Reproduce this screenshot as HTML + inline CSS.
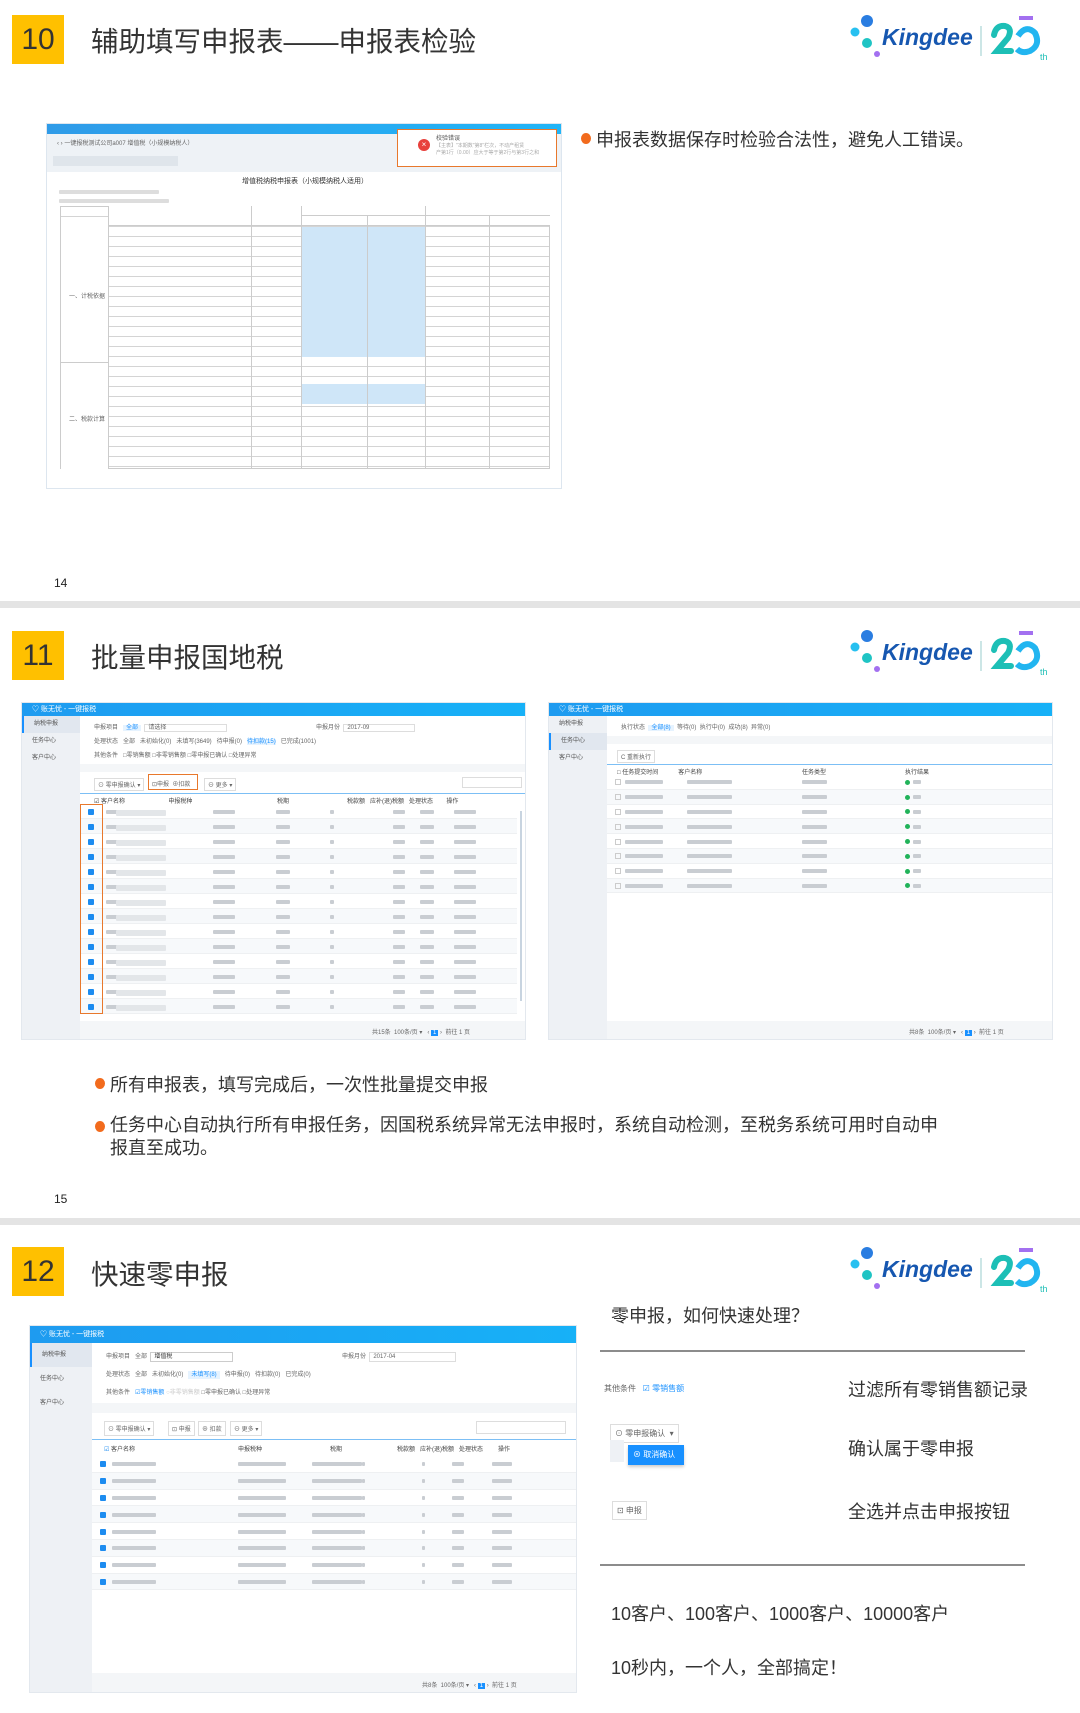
<!DOCTYPE html>
<html><head><meta charset="utf-8">
<style>
*{margin:0;padding:0;box-sizing:border-box}
body{width:1080px;height:1713px;background:#fff;position:relative;overflow:hidden;font-family:"Liberation Sans","Noto Sans CJK SC",sans-serif;color:#333}
.a{position:absolute}
.num{position:absolute;left:12px;width:52px;height:49px;background:#ffc000;color:#333;font-size:30px;line-height:49px;text-align:center}
.title{position:absolute;left:91px;font-size:27.5px;color:#333;font-family:"Liberation Sans","Noto Sans CJK SC",sans-serif}
.sep{position:absolute;left:0;width:1080px;height:7px;background:#e4e4e4}
.pg{position:absolute;left:54px;font-size:12px;color:#222}
.bul{position:absolute;font-size:18px;color:#333;white-space:nowrap}
.bul:before{content:"";position:absolute;left:-15px;top:7px;width:10px;height:11px;border-radius:50%;background:#f26b1d}
.logo{position:absolute;left:848px;width:210px;height:60px}
.win{position:absolute;background:#f5f7fa;border:1px solid #e3e8ee;overflow:hidden}
.tb{position:absolute;left:0;top:0;right:0;height:13px;background:linear-gradient(90deg,#1e9bf0,#17b1f7);color:#fff;font-size:7px;line-height:13px;padding-left:10px}
.side{position:absolute;left:0;top:13px;bottom:0;width:58px;background:#eef1f5;font-size:6px;color:#555}
.side div{height:17px;line-height:17px;padding-left:10px}
.side .on{background:#e1e7ef;border-left:2px solid #1890ff}
.main{position:absolute;left:58px;top:13px;right:0;bottom:0;background:#fff}
.f{font-size:6px;color:#666;position:absolute;white-space:nowrap}
.row{position:absolute;left:0;right:0;border-bottom:1px solid #eef0f2}
.cb{position:absolute;width:6px;height:6px;background:#1d8cf0;border-radius:1px}
.gb{position:absolute;height:4px;background:#c9cdd2;border-radius:1px}
.grn{position:absolute;width:5px;height:5px;border-radius:50%;background:#21b35a}
.vl{position:absolute;width:1px;background:#ccc}
</style></head><body>

<!-- ===== Section 10 ===== -->
<div class="num" style="top:15px">10</div>
<div class="title" style="top:19px">辅助填写申报表——申报表检验</div>
<svg class="logo" style="top:8px" viewBox="0 0 210 60">
<circle cx="19" cy="13" r="6" fill="#2a7de1"/><circle cx="7" cy="24" r="4.5" fill="#27c0f0"/><circle cx="19" cy="35" r="5" fill="#1fc4c4"/><circle cx="29" cy="46" r="3" fill="#a370f0"/>
<text x="34" y="37" font-family="Liberation Sans" font-weight="bold" font-style="italic" font-size="23" fill="#1657b0">Kingdee</text>
<line x1="133" y1="18" x2="133" y2="48" stroke="#9cc" stroke-width="1"/>
<path d="M146 27 q2-10 11-9 q8 2 3 12 l-11 13 h14" fill="none" stroke="#1dbfb6" stroke-width="6" stroke-linecap="round"/>
<path d="M170 28 q8-12 17 -3 q6 12 -5 18 q-8 3 -13 -2" fill="none" stroke="#22b5f0" stroke-width="6"/>
<rect x="171" y="8" width="14" height="4" fill="#a370f0"/>
<text x="192" y="52" font-size="9" fill="#1dbfb6" font-family="Liberation Sans">th</text>
</svg>

<!-- screenshot 1 -->
<div class="a" style="left:46px;top:123px;width:516px;height:366px;border:1px solid #dde6ef;background:#fff;overflow:hidden">
 <div class="a" style="left:0;top:0;width:516px;height:10px;background:linear-gradient(90deg,#2f9be8,#21b5f7)"></div>
 <div class="a" style="left:0;top:10px;width:516px;height:38px;background:#eef2f6"></div>
 <div class="f" style="left:10px;top:14px">‹ ›  一键报税测试公司a007  增值税（小规模纳税人）</div>
 <div class="a" style="left:6px;top:32px;width:125px;height:10px;background:#dfe5eb"></div>
 <div class="f" style="left:195px;top:52px;font-size:7px;color:#333">增值税纳税申报表（小规模纳税人适用）</div>
 <div class="gb" style="left:12px;top:66px;width:100px;background:#ddd"></div>
 <div class="gb" style="left:12px;top:75px;width:110px;background:#ddd"></div>
 <div class="a" style="left:13px;top:82px;width:490px;height:263px;border:1px solid #ccc;
 background:
 linear-gradient(#cfe6f8,#cfe6f8) 241px 20px/124px 130px no-repeat,
 linear-gradient(#cfe6f8,#cfe6f8) 241px 177px/124px 20px no-repeat,
 repeating-linear-gradient(#fff 0 9.1px,#d4d4d4 9.1px 10px),#fff"></div>
 <div class="a" style="left:61px;top:82px;width:442px;height:20px;background:#fff;border-bottom:1px solid #ccc"></div>
 <div class="a" style="left:254px;top:91px;width:249px;height:1px;background:#ccc"></div>
 <div class="vl" style="left:61px;top:82px;height:263px"></div>
 <div class="vl" style="left:204px;top:82px;height:263px"></div>
 <div class="vl" style="left:254px;top:82px;height:263px"></div>
 <div class="vl" style="left:320px;top:91px;height:254px"></div>
 <div class="vl" style="left:378px;top:82px;height:263px"></div>
 <div class="vl" style="left:442px;top:91px;height:254px"></div>
 <div class="a" style="left:14px;top:102px;width:47px;height:243px;background:#fff"></div>
 <div class="a" style="left:13px;top:238px;width:49px;height:1px;background:#ccc"></div>
 <div class="f" style="left:22px;top:167px">一、计税依据</div>
 <div class="f" style="left:22px;top:290px">二、税款计算</div>
 <!-- error popup -->
 <div class="a" style="left:350px;top:5px;width:160px;height:38px;border:1px solid #e8782c;background:#fff">
  <div class="a" style="left:20px;top:9px;width:12px;height:12px;border-radius:50%;background:#e8413c;color:#fff;font-size:8px;line-height:12px;text-align:center">×</div>
  <div class="f" style="left:38px;top:3px;color:#555">校验错误</div>
  <div class="f" style="left:38px;top:12px;color:#aaa;font-size:5px">【主表】"本期数"第8"栏次，不动产租赁</div>
  <div class="f" style="left:38px;top:19px;color:#aaa;font-size:5px">产第1行（0.00）应大于等于第2行与第3行之和</div>
 </div>
</div>
<div class="bul" style="left:596px;top:126px">申报表数据保存时检验合法性，避免人工错误。</div>
<div class="pg" style="top:576px">14</div>
<div class="sep" style="top:601px"></div>

<!-- ===== Section 11 ===== -->
<div class="num" style="top:631px">11</div>
<div class="title" style="top:635px">批量申报国地税</div>
<svg class="logo" style="top:623px" viewBox="0 0 210 60">
<circle cx="19" cy="13" r="6" fill="#2a7de1"/><circle cx="7" cy="24" r="4.5" fill="#27c0f0"/><circle cx="19" cy="35" r="5" fill="#1fc4c4"/><circle cx="29" cy="46" r="3" fill="#a370f0"/>
<text x="34" y="37" font-family="Liberation Sans" font-weight="bold" font-style="italic" font-size="23" fill="#1657b0">Kingdee</text>
<line x1="133" y1="18" x2="133" y2="48" stroke="#9cc" stroke-width="1"/>
<path d="M146 27 q2-10 11-9 q8 2 3 12 l-11 13 h14" fill="none" stroke="#1dbfb6" stroke-width="6" stroke-linecap="round"/>
<path d="M170 28 q8-12 17 -3 q6 12 -5 18 q-8 3 -13 -2" fill="none" stroke="#22b5f0" stroke-width="6"/>
<rect x="171" y="8" width="14" height="4" fill="#a370f0"/>
<text x="192" y="52" font-size="9" fill="#1dbfb6" font-family="Liberation Sans">th</text>
</svg>

<!-- left window -->
<div class="win" style="left:21px;top:702px;width:505px;height:338px">
 <div class="tb">♡ 账无忧 - 一键报税</div>
 <div class="side"><div class="on">纳税申报</div><div>任务中心</div><div>客户中心</div></div>
 <div class="main">
  <div class="f" style="left:14px;top:6px">申报项目 &nbsp; <span style="color:#1890ff;background:#e6f3ff;padding:0 3px">全部</span> &nbsp;<span style="border:1px solid #ddd;padding:0 60px 0 3px">请选择</span></div>
  <div class="f" style="left:236px;top:6px">申报月份 &nbsp;<span style="border:1px solid #ddd;padding:0 45px 0 3px">2017-09</span></div>
  <div class="f" style="left:14px;top:20px">处理状态 &nbsp; 全部 &nbsp; 未初始化(0) &nbsp; 未填写(3649) &nbsp; 待申报(0) &nbsp; <span style="color:#1890ff;background:#e6f3ff">待扣款(15)</span> &nbsp; 已完成(1001)</div>
  <div class="f" style="left:14px;top:34px">其他条件 &nbsp; □零销售额 □非零销售额 □零申报已确认 □处理异常</div>
  <div class="a" style="left:0;top:48px;right:0;height:8px;background:#f4f6f8"></div>
  <div class="f" style="left:14px;top:62px;border:1px solid #ddd;padding:1px 3px">⊙ 零申报确认 ▾</div>
  <div class="a" style="left:68px;top:58px;width:50px;height:16px;border:1.5px solid #e8782c"></div>
  <div class="f" style="left:72px;top:63px">⊡申报 &nbsp;⊕扣款</div>
  <div class="f" style="left:124px;top:62px;border:1px solid #ddd;padding:1px 3px">⊖ 更多 ▾</div>
  <div class="a" style="left:382px;top:61px;width:60px;height:11px;border:1px solid #ddd"></div>
  <div class="a" style="left:0;top:77px;right:0;height:1px;background:#7cbff5"></div>
  <div class="f" style="left:14px;top:80px;color:#444">☑ 客户名称 &nbsp;&nbsp;&nbsp;&nbsp;&nbsp;&nbsp;&nbsp;&nbsp;&nbsp;&nbsp;&nbsp;&nbsp;&nbsp;&nbsp;&nbsp;&nbsp;&nbsp;&nbsp;&nbsp;&nbsp;&nbsp;&nbsp;&nbsp;&nbsp; 申报税种</div>
  <div class="f" style="left:197px;top:80px;color:#444">税期</div>
  <div class="f" style="left:267px;top:80px;color:#444">税款额 &nbsp; 应补(退)税额 &nbsp; 处理状态 &nbsp;&nbsp;&nbsp;&nbsp;&nbsp;&nbsp; 操作</div>
  <div id="r1" class="a" style="left:0;top:88px;right:8px;height:210px"></div>
  <div class="a" style="left:0;top:88px;width:23px;height:210px;border:1.5px solid #e8782c"></div>
  <div class="a" style="right:3px;top:95px;width:2px;height:190px;background:#c8d4e0"></div>
  <div class="a" style="left:0;top:305px;right:0;bottom:0;background:#f4f6f8"></div>
  <div class="f" style="left:292px;top:311px">共15条 &nbsp;100条/页 ▾ &nbsp; ‹ <span style="background:#1890ff;color:#fff;padding:0 2px">1</span> › &nbsp;前往 1 页</div>
 </div>
</div>

<!-- right window -->
<div class="win" style="left:548px;top:702px;width:505px;height:338px">
 <div class="tb">♡ 账无忧 - 一键报税</div>
 <div class="side"><div>纳税申报</div><div class="on">任务中心</div><div>客户中心</div></div>
 <div class="main">
  <div class="f" style="left:14px;top:6px">执行状态 &nbsp;<span style="color:#1890ff;background:#e6f3ff;padding:0 3px">全部(8)</span> &nbsp;等待(0) &nbsp;执行中(0) &nbsp;成功(8) &nbsp;异常(0)</div>
  <div class="a" style="left:0;top:20px;right:0;height:8px;background:#f4f6f8"></div>
  <div class="f" style="left:10px;top:34px;border:1px solid #ddd;padding:1px 3px">C 重新执行</div>
  <div class="a" style="left:0;top:48px;right:0;height:1px;background:#7cbff5"></div>
  <div class="f" style="left:10px;top:51px;color:#444">□ 任务提交时间 &nbsp;&nbsp;&nbsp;&nbsp;&nbsp;&nbsp;&nbsp;&nbsp;&nbsp;&nbsp; 客户名称</div>
  <div class="f" style="left:195px;top:51px;color:#444">任务类型</div>
  <div class="f" style="left:298px;top:51px;color:#444">执行结果</div>
  <div id="r2" class="a" style="left:0;top:59px;right:0;height:120px"></div>
  <div class="a" style="left:0;top:305px;right:0;bottom:0;background:#f4f6f8"></div>
  <div class="f" style="left:302px;top:311px">共8条 &nbsp;100条/页 ▾ &nbsp; ‹ <span style="background:#1890ff;color:#fff;padding:0 2px">1</span> › &nbsp;前往 1 页</div>
 </div>
</div>

<div class="bul" style="left:110px;top:1071px">所有申报表，填写完成后，一次性批量提交申报</div>
<div class="bul" style="left:110px;top:1114px;line-height:23px">任务中心自动执行所有申报任务，因国税系统异常无法申报时，系统自动检测，至税务系统可用时自动申<br>报直至成功。</div>
<div class="pg" style="top:1192px">15</div>
<div class="sep" style="top:1218px"></div>

<!-- ===== Section 12 ===== -->
<div class="num" style="top:1247px">12</div>
<div class="title" style="top:1252px">快速零申报</div>
<svg class="logo" style="top:1240px" viewBox="0 0 210 60">
<circle cx="19" cy="13" r="6" fill="#2a7de1"/><circle cx="7" cy="24" r="4.5" fill="#27c0f0"/><circle cx="19" cy="35" r="5" fill="#1fc4c4"/><circle cx="29" cy="46" r="3" fill="#a370f0"/>
<text x="34" y="37" font-family="Liberation Sans" font-weight="bold" font-style="italic" font-size="23" fill="#1657b0">Kingdee</text>
<line x1="133" y1="18" x2="133" y2="48" stroke="#9cc" stroke-width="1"/>
<path d="M146 27 q2-10 11-9 q8 2 3 12 l-11 13 h14" fill="none" stroke="#1dbfb6" stroke-width="6" stroke-linecap="round"/>
<path d="M170 28 q8-12 17 -3 q6 12 -5 18 q-8 3 -13 -2" fill="none" stroke="#22b5f0" stroke-width="6"/>
<rect x="171" y="8" width="14" height="4" fill="#a370f0"/>
<text x="192" y="52" font-size="9" fill="#1dbfb6" font-family="Liberation Sans">th</text>
</svg>

<div class="win" style="left:29px;top:1325px;width:548px;height:368px">
 <div class="tb" style="height:17px;line-height:17px">♡ 账无忧 - 一键报税</div>
 <div class="side" style="top:17px;width:62px"><div class="on" style="height:24px;line-height:24px">纳税申报</div><div style="height:24px;line-height:24px">任务中心</div><div style="height:24px;line-height:24px">客户中心</div></div>
 <div class="main" style="left:62px;top:17px">
  <div class="f" style="left:14px;top:8px">申报项目 &nbsp; 全部 &nbsp;<span style="border:1px solid #ccc;padding:1px 60px 1px 3px;color:#333">增值税</span></div>
  <div class="f" style="left:250px;top:8px">申报月份 &nbsp;<span style="border:1px solid #ddd;padding:1px 60px 1px 3px">2017-04</span></div>
  <div class="f" style="left:14px;top:26px">处理状态 &nbsp; 全部 &nbsp; 未初始化(0) &nbsp; <span style="color:#1890ff;background:#e6f3ff;padding:1px 3px">未填写(8)</span> &nbsp; 待申报(0) &nbsp; 待扣款(0) &nbsp; 已完成(0)</div>
  <div class="f" style="left:14px;top:44px">其他条件 &nbsp; <span style="color:#1890ff">☑零销售额</span> <span style="color:#ccc">○非零销售额</span> □零申报已确认 □处理异常</div>
  <div class="a" style="left:0;top:60px;right:0;height:10px;background:#f4f6f8"></div>
  <div class="f" style="left:12px;top:78px;border:1px solid #ddd;padding:2px 3px">⊙ 零申报确认 ▾</div>
  <div class="f" style="left:76px;top:78px;border:1px solid #ddd;padding:2px 3px">⊡ 申报</div>
  <div class="f" style="left:106px;top:78px;border:1px solid #ddd;padding:2px 3px">⊕ 扣款</div>
  <div class="f" style="left:138px;top:78px;border:1px solid #ddd;padding:2px 3px">⊖ 更多 ▾</div>
  <div class="a" style="left:384px;top:78px;width:90px;height:13px;border:1px solid #ddd"></div>
  <div class="a" style="left:0;top:96px;right:0;height:1px;background:#7cbff5"></div>
  <div class="f" style="left:12px;top:101px;color:#444"><span style="color:#1d8cf0">☑</span> 客户名称</div>
  <div class="f" style="left:146px;top:101px;color:#444">申报税种</div>
  <div class="f" style="left:238px;top:101px;color:#444">税期</div>
  <div class="f" style="left:305px;top:101px;color:#444">税款额 &nbsp; 应补(退)税额 &nbsp; 处理状态 &nbsp;&nbsp;&nbsp;&nbsp;&nbsp;&nbsp;&nbsp; 操作</div>
  <div id="r3" class="a" style="left:0;top:113px;right:0;height:136px"></div>
  <div class="a" style="left:0;top:330px;right:0;bottom:0;background:#f4f6f8"></div>
  <div class="f" style="left:330px;top:337px">共8条 &nbsp;100条/页 ▾ &nbsp; ‹ <span style="background:#1890ff;color:#fff;padding:0 2px">1</span> › &nbsp;前往 1 页</div>
 </div>
</div>

<div class="a" style="left:611px;top:1302px;font-size:18px;color:#333">零申报，如何快速处理？</div>
<div class="a" style="left:600px;top:1350px;width:425px;height:2px;background:#8c8c8c"></div>
<div class="a" style="left:600px;top:1564px;width:425px;height:2px;background:#8c8c8c"></div>
<div class="f" style="left:604px;top:1383px;font-size:8px">其他条件 &nbsp; <span style="color:#1890ff">☑ 零销售额</span></div>
<div class="f" style="left:610px;top:1424px;font-size:8px;border:1px solid #ddd;padding:3px 4px;background:#fff">⊙ 零申报确认 &nbsp;▾</div>
<div class="a" style="left:610px;top:1440px;width:14px;height:22px;background:#eef1f5"></div>
<div class="a" style="left:628px;top:1445px;width:56px;height:20px;background:#1890ff;color:#fff;font-size:8px;line-height:20px;padding-left:5px;box-shadow:0 2px 3px #ccc">⊗ 取消确认</div>
<div class="f" style="left:612px;top:1501px;font-size:8px;border:1px solid #ddd;padding:3px 4px">⊡ 申报</div>
<div class="a" style="left:848px;top:1376px;font-size:18px;color:#333">过滤所有零销售额记录</div>
<div class="a" style="left:848px;top:1435px;font-size:18px;color:#333">确认属于零申报</div>
<div class="a" style="left:848px;top:1498px;font-size:18px;color:#333">全选并点击申报按钮</div>
<div class="a" style="left:611px;top:1600px;font-size:18px;color:#333">10客户、100客户、1000客户、10000客户</div>
<div class="a" style="left:611px;top:1654px;font-size:18px;color:#333">10秒内，一个人，全部搞定！</div>

<script>
function rows(id,n,h,cols,opt){
 var c=document.getElementById(id),s='';
 for(var i=0;i<n;i++){
  s+='<div class="row" style="top:'+(i*h)+'px;height:'+h+'px;'+(i%2?'background:#f7f9fb':'')+'">';
  if(opt.cb) s+='<div class="cb" style="left:'+opt.cb+'px;top:'+(h/2-3)+'px"></div>';
  if(opt.ecb) s+='<div class="a" style="left:'+opt.ecb+'px;top:'+(h/2-3)+'px;width:6px;height:6px;border:1px solid #ccc"></div>';
  cols.forEach(function(k){s+='<div class="gb" style="left:'+k[0]+'px;width:'+k[1]+'px;top:'+(h/2-2)+'px;'+(k[2]||'')+'"></div>';});
  if(opt.grn) s+='<div class="grn" style="left:'+opt.grn+'px;top:'+(h/2-2.5)+'px"></div>';
  s+='</div>';
 }
 c.innerHTML=s;
}
rows('r1',14,15,[[26,18],[36,50,'background:#e3e6e9;height:6px'],[133,22],[196,14],[250,4],[313,12],[340,14],[374,22]],{cb:8});
rows('r2',8,14.8,[[18,38],[80,45],[195,25],[306,8]],{ecb:8,grn:298});
rows('r3',8,16.8,[[20,44],[146,48],[220,50],[270,3],[330,3],[360,12],[400,20]],{cb:8});
</script>
</body></html>
